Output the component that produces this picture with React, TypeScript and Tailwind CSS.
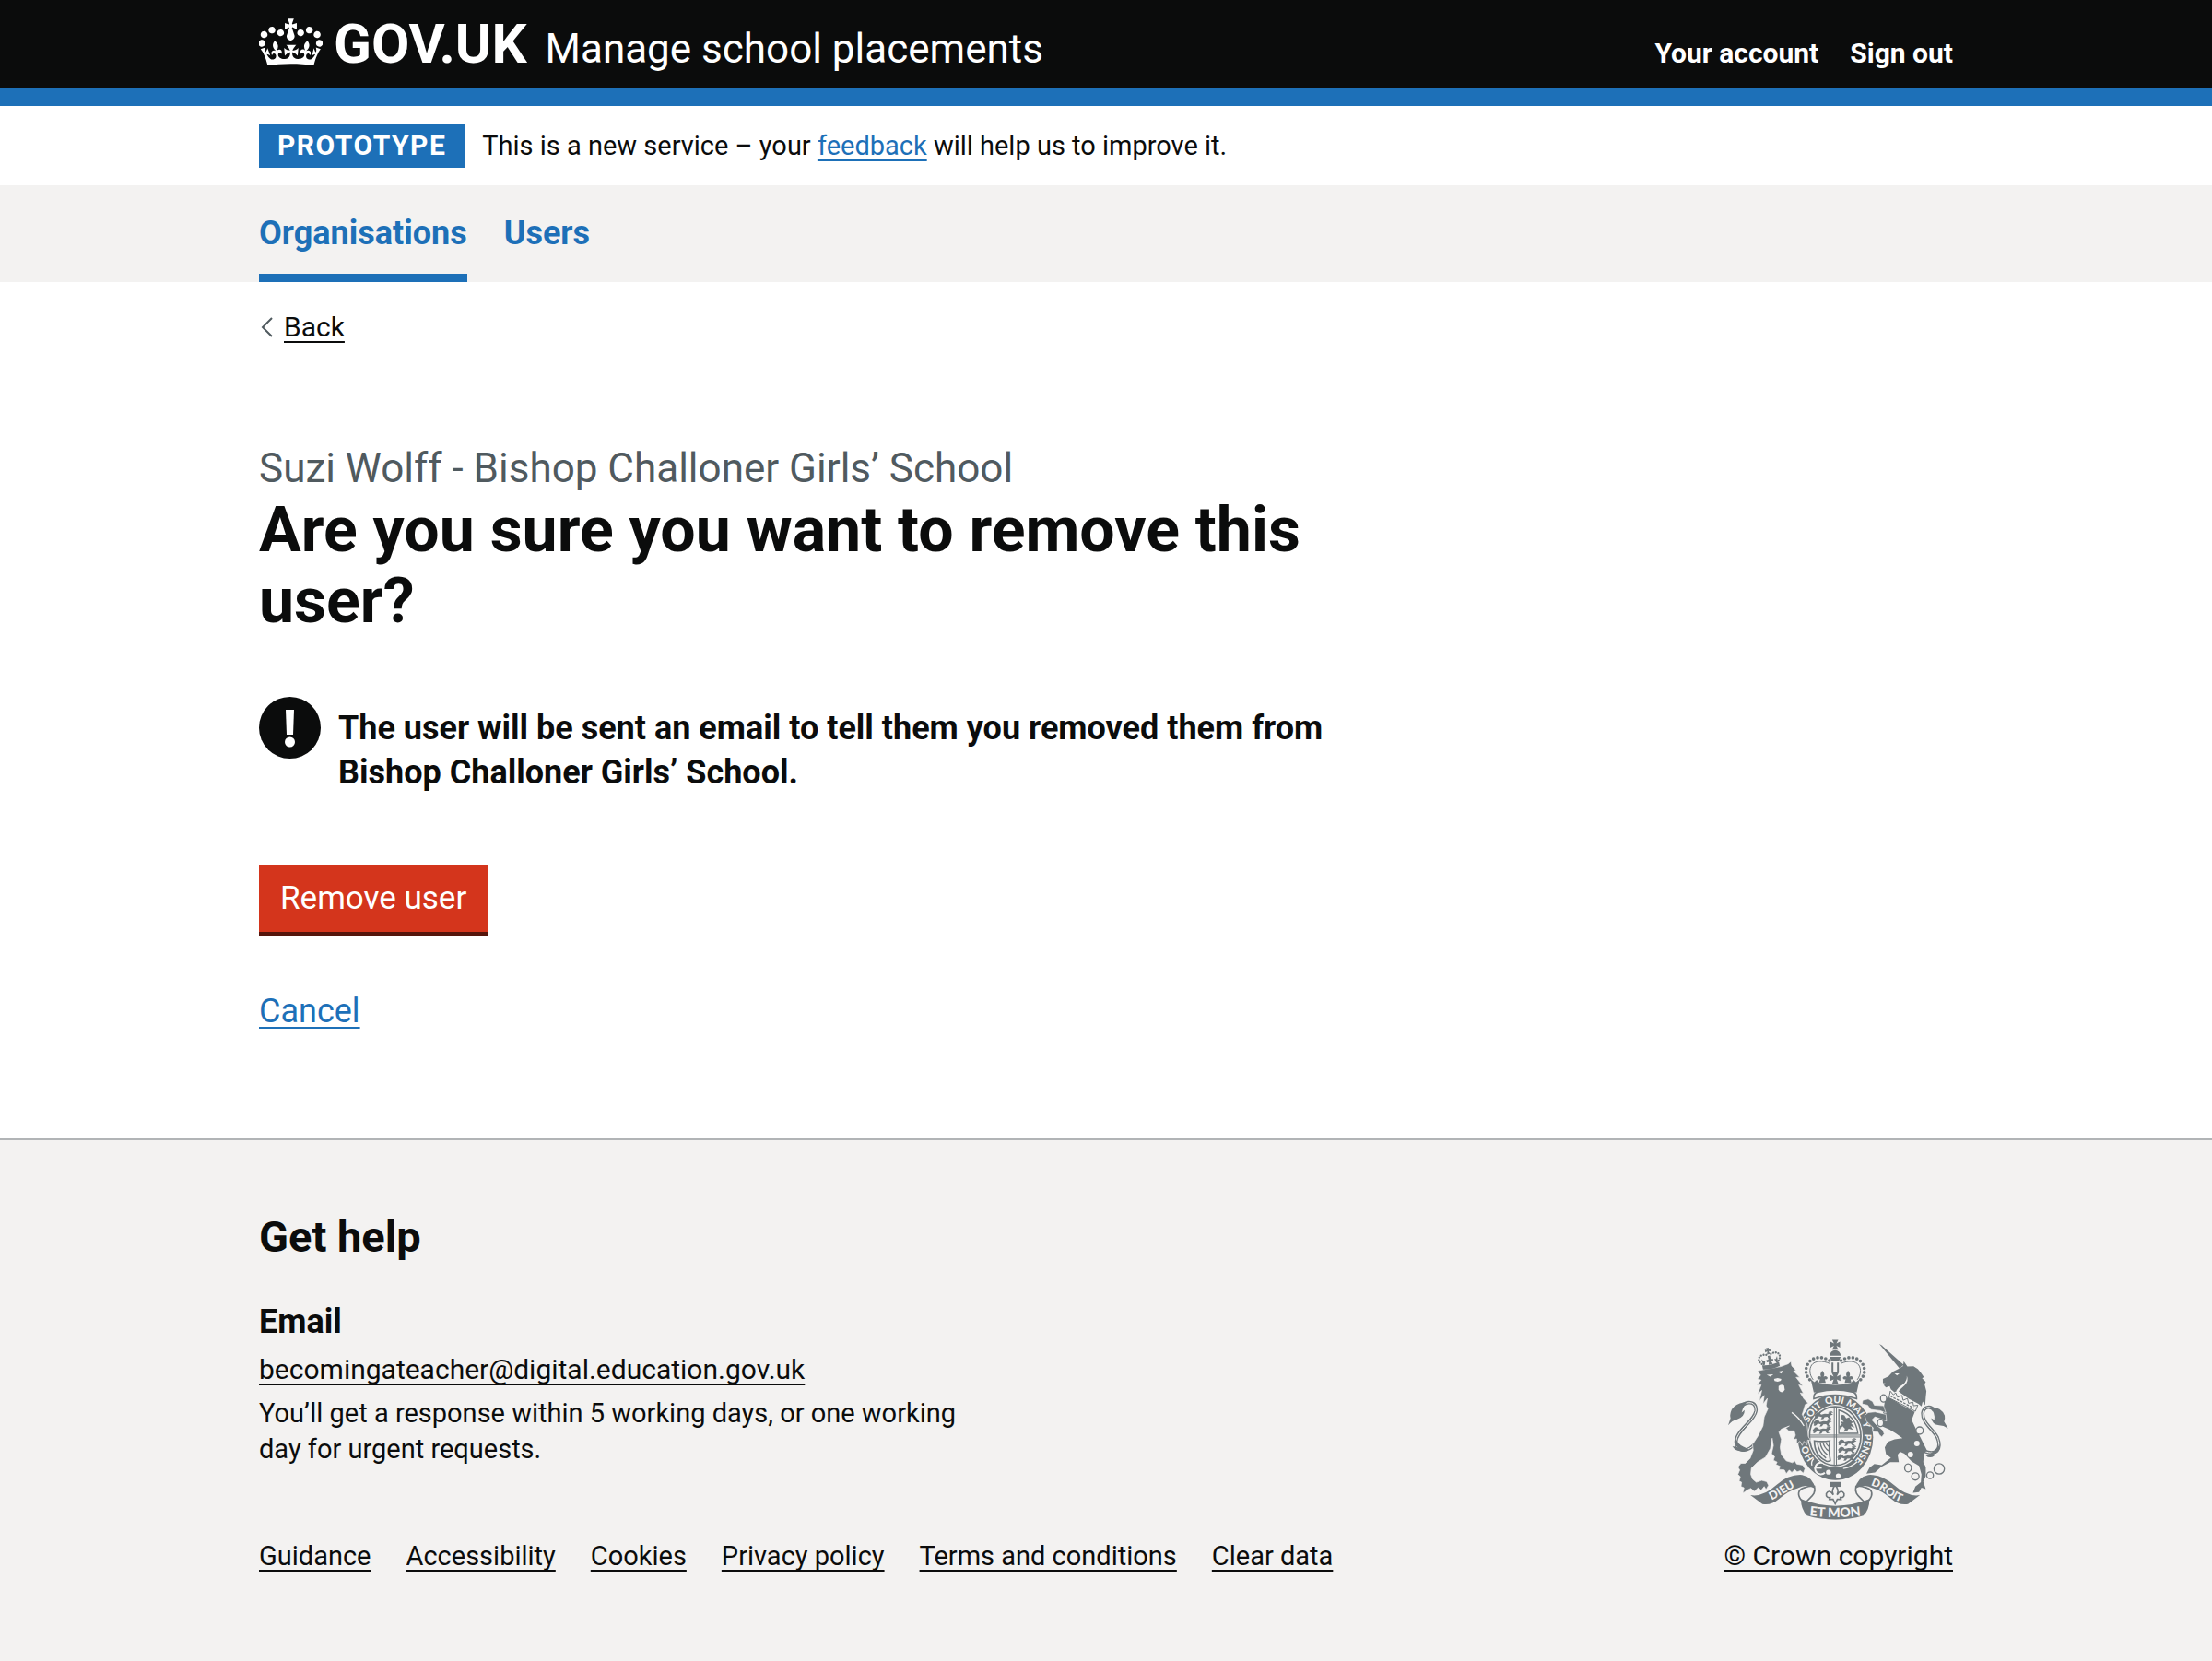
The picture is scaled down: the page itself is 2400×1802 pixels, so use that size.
import React from "react";

const link = "underline decoration-2 underline-offset-[5px] [text-decoration-skip-ink:none]";
const container = "mx-auto w-full max-w-[1838px]";

function Crown() {
  return (
    <svg viewBox="0.3 4 35.2 26" className="mt-5 h-[51px] w-[69px] self-start" fill="currentColor" aria-hidden="true">
      <path d="M6.7 12.2c1 .4 2.1-.1 2.5-1s-.1-2.1-1-2.5c-1-.4-2.1.1-2.5 1-.4 1 0 2.1 1 2.5m-4.3 2.5c1 .4 2.1-.1 2.5-1s-.1-2.1-1-2.5c-1-.4-2.1.1-2.5 1-.5 1 0 2.1 1 2.5m-1.3 4.8c1 .4 2.1-.1 2.5-1 .4-1-.1-2.1-1-2.5-1-.4-2.1.1-2.5 1-.4 1 0 2.1 1 2.5m10.4-5.8c1 .4 2.1-.1 2.5-1s-.1-2.1-1-2.5c-1-.4-2.1.1-2.5 1s0 2.1 1 2.5m17.4-1.5c-1 .4-2.1-.1-2.5-1s.1-2.1 1-2.5c1-.4 2.1.1 2.5 1 .5 1 0 2.1-1 2.5m4.3 2.5c-1 .4-2.1-.1-2.5-1s.1-2.1 1-2.5c1-.4 2.1.1 2.5 1 .5 1 0 2.1-1 2.5m1.3 4.8c-1 .4-2.1-.1-2.5-1-.4-1 .1-2.1 1-2.5 1-.4 2.1.1 2.5 1 .4 1 0 2.1-1 2.5m-10.4-5.8c-1 .4-2.1-.1-2.5-1s.1-2.1 1-2.5c1-.4 2.1.1 2.5 1s0 2.1-1 2.5m-5.3-4.9 2.4 1.3V6.5l-2.4.8c-.1-.1-.1-.2-.2-.2s1-3 1-3h-3.4l1 3c-.1.1-.2.1-.2.2-.1.1-2.4-.7-2.4-.7v3.500L17 8.8c-.1.1 0 .2.1.3l-1.4 4.2c-.1.2-.1.4-.1.7 0 1.1.8 2.1 1.9 2.2h.6C19.2 16 20 15.1 20 14c0-.2 0-.4-.1-.7l-1.4-4.2c.2-.1.3-.2.3-.3m-1 20.3c4.6 0 8.9.3 12.8.9 1.1-4.6 2.4-7.2 3.8-9.1l-2.6-.9c.3 1.3.3 1.9 0 2.8-.4-.4-.8-1.2-1.1-2.4l-1.2 4.2c.8-.5 1.4-.9 2-.9-1.2 2.6-2.7 3.2-3.6 3-1.2-.2-1.7-1.3-1.5-2.2.3-1.3 1.6-1.6 2.2-.1 1.2-2.4-.8-3.1-2.1-2.4 1.9-1.9 2.2-3.6.6-5.7-2.2 1.7-2.2 3.3-1.2 5.6-1.3-1.5-3.3-.7-2.5 1.7.9-1.5 2.1-.5 2 .8-.2 1.2-1.7 2.1-3.7 2-2.8-.2-3-2.2-3-3.7.7-.1 1.9.5 3 2l.4-4.4c-1.1 1.2-2.2 1.4-3.3 1.4.4-1.2 2.1-3.1 2.1-3.1h-5.5s1.8 1.9 2.1 3.1c-1.1 0-2.2-.3-3.3-1.4l.4 4.4c1.1-1.5 2.3-2.1 3-2-.1 1.6-.2 3.5-3 3.7-1.9.2-3.5-.8-3.7-2-.2-1.3 1-2.2 1.9-.8.7-2.4-1.3-3.1-2.6-1.7 1-2.3 1-4-1.2-5.6-1.6 2.1-1.3 3.8.6 5.7-1.3-.7-3.2 0-2.1 2.4.6-1.5 1.9-1.1 2.2.1.2.9-.4 1.9-1.5 2.2-1 .2-2.4-.5-3.6-3 .7 0 1.3.4 2 .9L5 20.4c-.3 1.2-.7 1.9-1.2 2.4-.3-.8-.2-1.5 0-2.8l-2.6.9C2.7 22.8 4 25.4 5.1 30c3.8-.5 8.2-.9 12.7-.9" />
    </svg>
  );
}

const G = "#6f777b";
const B = "#f3f2f1";

function PassantLion({ x, y }: { x: number; y: number }) {
  return (
    <g transform={`translate(${x} ${y})`} fill={G}>
      <path d="M2 6l6-5 8 2 4 5 12-3 10 1 6-5 8-2-3 5 6 3-8 3-3 6 6 4-9 1-5-6-9 1-4 6-8 1 4-7-10-3-5 6-9 1 5-6-6-2z" />
      <path d="M4 8q-6 6 0 12M44 1q10-6 14 0" fill="none" stroke={G} strokeWidth="3" />
    </g>
  );
}

function RoyalArms() {
  return (
    <svg viewBox="72 68 720 590" className="h-[196px] w-[239px]" aria-hidden="true">
      {/* imperial crown */}
      <g fill={G}>
        <path d="M412 69h20l-6 12 12-6v20l-12-6 6 13h-20l6-13-12 6V75l12 6z" />
        <path d="M404 121a18 18 0 0 1 36 0zM404 125h36l-5 12q-13 6-26 0z" />
        <path d="M410 144h6v30h-6zM428 144h6v30h-6z" />
        <path d="M410 176h24l-7 14 12-6v20l-12-5 5 14h-20l5-14-12 5v-20l12 6z" />
        <path d="M380 170q-10 11-4 20-9-5-13 3 0 8 9 5l-3 12h22l-3-12q9 3 9-5-4-8-13-3 6-9-4-20zM464 170q-10 11-4 20-9-5-13 3 0 8 9 5l-3 12h22l-3-12q9 3 9-5-4-8-13-3 6-9-4-20z" />
        <path d="M342 198l12 10 8-8 8 10q52 14 104 0l8-10 8 8 12-10-10 44q-70-18-140 0z" />
      </g>
      <g fill="none" stroke={G}>
        <path d="M403 137C380 122 350 125 336 143C322 162 324 184 339 200" strokeWidth="11" strokeLinecap="round" strokeDasharray="0 13.5" />
        <path d="M441 137C464 122 494 125 508 143C522 162 520 184 505 200" strokeWidth="11" strokeLinecap="round" strokeDasharray="0 13.5" />
        <path d="M404 147C380 136 355 138 345 152C336 166 338 184 350 200M440 147C464 136 489 138 499 152C508 166 506 184 494 200" strokeWidth="3" />
      </g>

      {/* garter */}
      <ellipse cx="423" cy="388" rx="123" ry="140" fill={G} />
      <ellipse cx="422" cy="384" rx="90" ry="102" fill={B} />
      <path d="M352 262q-2-18 14-22 56-14 112 0 16 4 14 22-70-24-140 0z" fill={B} stroke={G} strokeWidth="5" />
      <path id="garter-line" d="M423 492A95 108 0 0 1 423 276A95 108 0 0 1 423 492" fill="none" />
      <g fill={B} className="font-['Lato'] text-[31px] font-black" textAnchor="middle">
        <text><textPath href="#garter-line" startOffset="16.5%">HO</textPath></text>
        <text><textPath href="#garter-line" startOffset="37.5%">SOIT</textPath></text>
        <text><textPath href="#garter-line" startOffset="49.5%">QUI</textPath></text>
        <text><textPath href="#garter-line" startOffset="60.500%">MAL</textPath></text>
        <text><textPath href="#garter-line" startOffset="69.500%">Y</textPath></text>
        <text><textPath href="#garter-line" startOffset="81.500%">PENSE</textPath></text>
      </g>
      <path d="M448 490q24-2 46-22M352 458q-10 10-6 22" fill="none" stroke={B} strokeWidth="4" />
      <path d="M388 476a19 19 0 1 0 0 28" fill="none" stroke={B} strokeWidth="6" />
      <path d="M354 488h24" stroke={B} strokeWidth="5" />
      <circle cx="400" cy="502" r="8" fill={B} />
      <circle cx="432" cy="514" r="8" fill={B} />

      {/* shield */}
      <ellipse cx="422" cy="384" rx="84" ry="96" fill={B} stroke={G} strokeWidth="5" />
      <path d="M419 288v192M426 288v192M338 381h168M338 387h168" stroke={G} strokeWidth="3" />
      <PassantLion x={356} y={306} />
      <PassantLion x={352} y={330} />
      <PassantLion x={350} y={354} />
      <PassantLion x={433} y={394} />
      <PassantLion x={433} y={418} />
      <PassantLion x={430} y={442} />
      <path d="M434 299q54 16 62 76h-62z" fill="none" stroke={G} strokeWidth="4" />
      <path d="M444 314l8 2 6 10 10-4 4 10 10 8-8 2 12 14-14-4 8 12-14-4-6 8-10 2 4-10-8-8-8 10-2-10 8-8-4-8 10 2-10-14z" fill={G} />
      <path d="M354 400q26 4 50 0-4 30 2 64-10 6-16 0-36-18-36-64z" fill="none" stroke={G} strokeWidth="5" />
      <path d="M364 404q2 30 28 52M373 404q2 24 24 42M382 404q4 18 18 28M391 404q2 8 10 14" fill="none" stroke={G} strokeWidth="4" />

      {/* lion */}
      <g transform="translate(30 45)">
        <path d="M128 366C104 394 66 390 68 356C70 320 128 290 133 256C135 228 108 222 86 240" fill="none" stroke={G} strokeWidth="11" />
        <path d="M128 366C104 394 66 390 68 356C70 320 128 290 133 256C135 228 108 222 86 240" fill="none" stroke={B} strokeWidth="3" />
        <path d="M104 228Q70 228 54 252Q46 268 50 280L42 304Q54 288 72 284Q96 276 96 254L86 262Q90 244 104 228zM66 346Q58 366 74 376L56 372Q64 386 80 388Q96 394 110 382L92 374Q74 366 66 346z" fill={G} />
        <path
          fill={G}
          stroke={B}
          strokeWidth="2"
          d="M138 126L168 120L214 112L238 103L247 95L250 110L264 124L256 127L276 147L264 147L286 175L273 172L288 200L278 198L290 218L304 232L294 236L288 256L284 268L300 300L304 340L312 354L302 352L300 368L290 356L284 370L277 356L266 364L266 348L256 350L262 336L258 322L240 322L230 312L242 306L216 316L208 326L216 350L212 376L216 400L232 420L252 426L260 420L266 430L286 434L293 446L288 460L278 452L268 456L260 448L250 458L242 450L232 462L226 450L208 448L212 438L198 432L202 424L190 418L194 406L184 396L190 370L186 346L180 380L164 408L138 424L118 444L116 464L122 480L134 490L152 484L168 488L174 500L166 514L160 504L150 516L140 508L128 520L116 510L104 516L90 526L94 508L84 504L86 490L78 486L82 472L74 464L80 450L74 440L84 428L98 428L114 412L124 386L122 366L140 338L156 306L160 276L172 250L166 240L170 216L156 234L160 206L144 224L152 190L138 202L150 172L136 172L150 156L138 152L148 140z"
        />
        <path d="M168 139l22-2-10 8zM204 129l18-4-6 10z" fill={B} />
        <path d="M192 152l12-3 12 3-2 6-10 3-10-2z" fill={B} />
        <path d="M207 176q8-8 18-2l2 14q-4 8-10 8-8-2-10-8z" fill={B} />
        <path d="M250 262q22 14 40 44" fill="none" stroke={B} strokeWidth="4" />
        <g transform="rotate(-12 178 90)">
          <path d="M150 102q28 8 56 0v14q-28 8-56 0z" fill={G} />
          <path d="M150 98C134 82 148 62 172 72M206 98C222 82 208 62 184 72" fill="none" stroke={G} strokeWidth="7" strokeLinecap="round" strokeDasharray="0 8.5" />
          <path d="M173 50h10l-3 6 7-2v9l-7-2 3 10h-10l3-10-7 2v-9l7 2zM174 76h8v12h7v8h-7l3 9h-14l3-9h-7v-8h7zM152 82l6 9 5-1-4 13h-6zM204 82l-6 9-5-1 4 13h6z" fill={G} />
        </g>
      </g>

      {/* unicorn */}
      <g transform="translate(420 45)">
        <path d="M292 388C336 406 350 378 336 344C324 318 286 296 288 264C292 240 316 240 326 256" fill="none" stroke={G} strokeWidth="11" />
        <path d="M292 388C336 406 350 378 336 344C324 318 286 296 288 264C292 240 316 240 326 256" fill="none" stroke={B} strokeWidth="3" />
        <path d="M312 244Q350 244 360 272Q362 284 358 292Q364 302 371 314Q356 304 342 304Q318 300 316 280L326 286Q330 264 312 244zM344 366Q346 396 322 398L326 404Q310 414 298 402Q322 396 344 366z" fill={G} />
        <path d="M146 38L154 42L226 106L212 118z" fill={G} />
        <path
          fill={G}
          d="M190 129L208 120L224 110L226 94L238 112L258 111L272 120L282 132L292 146L286 150L298 162L294 170L300 192L298 212L296 238L288 226L284 242L274 234L244 218L216 198L206 190L196 196L184 186L180 176L168 180L160 172L174 168L158 166L158 152L176 144z"
        />
        <path d="M196 134l16 0-8 7z" fill={B} />
        <path d="M236 142q8 18-8 32-12 10-22 22l-4-6q8-12 22-20 14-12 12-28z" fill={B} />
        <path
          fill={G}
          d="M166 216L178 212L216 236L262 260L252 286L264 312L280 342L292 366L302 386L292 396L290 424L298 440L298 470L290 488L298 512L284 508L276 522L256 524L264 504L282 490L284 464L276 436L252 422L228 396L214 390L206 400L210 424L182 424L152 440L132 458L104 462L114 442L130 430L154 434L184 410L168 398L164 376L174 358L196 350L222 346L200 330L180 318L158 308L140 296L150 284L166 278L158 262z"
        />
        <path
          fill={G}
          stroke={B}
          strokeWidth="2"
          d="M168 264L150 256L118 252L108 238L90 234L92 222L110 218L124 226L130 238L160 240zM170 290L132 276L122 286L136 302L158 320L162 332L154 342L146 334L142 326L124 324L126 312L104 290L98 272L110 262L132 260L168 268z"
        />
        <path d="M182 192l10 12 8-6 6 14 14-6 4 16 14-6 4 16 14-4 2 12 14-2-8 20-86-44z" fill={B} stroke={G} strokeWidth="3" />
        <path d="M182 208l78 40" stroke={G} strokeWidth="4" strokeDasharray="8 4" />
        <g fill={B} stroke={G} strokeWidth="4">
          <ellipse cx="160" cy="216" rx="10" ry="12" />
          <ellipse cx="150" cy="296" rx="10" ry="12" />
          <circle cx="278" cy="321" r="12" />
          <ellipse cx="240" cy="443" rx="11" ry="13" />
          <circle cx="264" cy="471" r="12" />
          <circle cx="312" cy="467" r="11" />
          <circle cx="342" cy="446" r="17" />
        </g>
        <circle cx="269" cy="363" r="9" fill={B} />
        <circle cx="248" cy="399" r="9" fill={B} />
      </g>

      {/* ribbon */}
      <g fill={B} stroke={G} strokeWidth="5">
        <path d="M354 548C362 578 336 584 326 602L310 592C298 576 300 560 318 554Q340 546 354 548z" />
        <path d="M490 548C482 578 508 584 518 602L534 592C546 576 544 560 526 554Q504 546 490 548z" />
      </g>
      <g fill={G}>
        <path d="M145 577Q186 584 230 544Q270 508 314 511Q350 518 356 556Q328 538 300 554Q270 562 240 588Q212 612 184 606z" />
        <path d="M699 577Q658 584 614 544Q574 508 530 511Q494 518 488 556Q516 538 544 554Q574 562 604 588Q632 612 660 606z" />
        <path d="M310 590Q364 612 422 612Q480 612 534 590Q534 626 514 644Q470 657 422 657Q374 657 330 644Q310 624 310 590z" />
        <path d="M406 534h34v16h-34z" />
      </g>
      <path id="ribbon-left" d="M204 600L302 544" fill="none" />
      <path id="ribbon-right" d="M528 543Q558 548 586 570Q614 594 646 602" fill="none" />
      <path id="ribbon-mid" d="M330 643Q422 655 514 643" fill="none" />
      <g fill={B} className="font-['Lato'] font-black" textAnchor="middle">
        <text className="text-[37px]"><textPath href="#ribbon-left" startOffset="50%">DIEU</textPath></text>
        <text className="text-[36px]"><textPath href="#ribbon-right" startOffset="50%">DROIT</textPath></text>
        <text className="text-[43px]"><textPath href="#ribbon-mid" startOffset="50%">ET MON</textPath></text>
      </g>
      <path
        d="M422 544q-14 16-6 32-14-20-23-4-2 14 12 13l-2 6h12l7 14 7-14h12l-2-6q14 1 12-13-9-16-23 4 8-16-6-32z"
        fill={B}
        stroke={G}
        strokeWidth="5"
      />
    </svg>
  );
}

const footerLinks = ["Guidance", "Accessibility", "Cookies", "Privacy policy", "Terms and conditions", "Clear data"];

export default function App() {
  return (
    <div className="min-h-screen bg-white font-['Roboto',sans-serif] text-[#0b0c0c]">
      <header className="border-b-[19px] border-[#1d70b8] bg-[#0b0c0c] text-white">
        <div className={`${container} flex h-24 items-baseline justify-between leading-[96px]`}>
          <div className="flex items-baseline">
            <a href="#" className="flex items-baseline gap-3 text-[60px] font-bold">
              <Crown />
              <span>GOV.UK</span>
            </a>
            <a href="#" className="ml-5 text-[44px]">Manage school placements</a>
          </div>
          <nav className="flex gap-[34px] text-[30px] font-bold">
            <a href="#">Your account</a>
            <a href="#">Sign out</a>
          </nav>
        </div>
      </header>

      <div className={`${container} flex items-center gap-[19px] py-[19px]`}>
        <strong className="bg-[#1d70b8] px-5 text-[30px] leading-[48px] font-bold tracking-wider text-white">PROTOTYPE</strong>
        <span className="text-[29px] leading-[38px]">
          This is a new service – your <a href="#" className={`${link} text-[#1d70b8]`}>feedback</a> will help us to improve it.
        </span>
      </div>

      <nav className="bg-[#f3f2f1]">
        <div className={`${container} flex gap-10 text-[36px] leading-[49px] font-bold text-[#1d70b8]`}>
          <a href="#" aria-current="page" className="py-7 shadow-[inset_0_-9px_0_#1d70b8]">Organisations</a>
          <a href="#" className="py-7">Users</a>
        </div>
      </nav>

      <div className={container}>
        <a href="#" className="mt-[29px] inline-flex items-center gap-3 text-[30px] leading-[40px]">
          <svg viewBox="0 0 15 22" className="h-[22px] w-[15px]" fill="none" stroke="#505a5f" strokeWidth="2" aria-hidden="true">
            <path d="M14 1L4 11l10 10" />
          </svg>
          <span className={link}>Back</span>
        </a>

        <main className="w-2/3 pt-[104px] pb-[114px]">
          <h1 className="text-[68px] leading-[77px] font-bold">
            <span className="block text-[44px] leading-[58px] font-normal text-[#505a5f]">Suzi Wolff - Bishop Challoner Girls’ School</span>
            Are you sure you want to remove this user?
          </h1>

          <div className="mt-[65px] flex items-start gap-[19px]">
            <svg viewBox="0 0 67 67" className="size-[67px] shrink-0" role="img" aria-label="Warning">
              <circle cx="33.5" cy="33.5" r="33.5" fill="#0b0c0c" />
              <path d="M29 14h9l-1 27h-7z" fill="#fff" />
              <circle cx="33.5" cy="49" r="5.5" fill="#fff" />
            </svg>
            <strong className="pt-[10px] text-[36px] leading-[48px] font-bold">
              The user will be sent an email to tell them you removed them from Bishop Challoner Girls’ School.
            </strong>
          </div>

          <button type="button" className="mt-[76px] block border-b-4 border-[#55150b] bg-[#d4351c] px-[23px] py-3 text-[35px] leading-[49px] text-white">
            Remove user
          </button>
          <p className="mt-[58px] text-[36px] leading-[48px]">
            <a href="#" className={`${link} text-[#1d70b8]`}>Cancel</a>
          </p>
        </main>
      </div>

      <footer className="border-t-2 border-[#b1b4b6] bg-[#f3f2f1] pt-[76px] pb-[95px]">
        <div className={`${container} flex items-end justify-between`}>
          <div>
            <h2 className="text-[47px] leading-[58px] font-bold">Get help</h2>
            <h3 className="mt-[39px] text-[36px] leading-[48px] font-bold">Email</h3>
            <p className="mt-[9px] text-[30px] leading-[38px]">
              <a href="#" className={link}>becomingateacher@digital.education.gov.uk</a>
            </p>
            <p className="mt-[9px] max-w-[800px] text-[29px] leading-[39px]">
              You’ll get a response within 5 working days, or one working day for urgent requests.
            </p>
            <ul className="mt-[77px] flex gap-[38px] text-[29px] leading-[38px]">
              {footerLinks.map((t) => (
                <li key={t}>
                  <a href="#" className={link}>{t}</a>
                </li>
              ))}
            </ul>
          </div>
          <a href="#" className="flex flex-col items-center gap-5 text-[30px] leading-[38px]">
            <RoyalArms />
            <span className={link}>© Crown copyright</span>
          </a>
        </div>
      </footer>
    </div>
  );
}
